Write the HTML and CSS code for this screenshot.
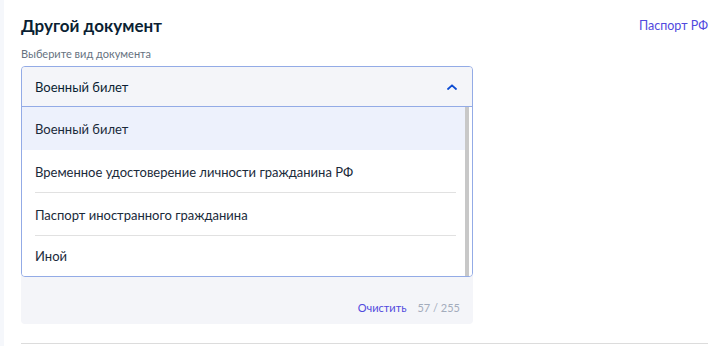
FILE: index.html
```html
<!DOCTYPE html>
<html lang="ru">
<head>
<meta charset="utf-8">
<link rel="stylesheet" href="styles.css">
</head>
<body>
<div class="page">
  <div class="content">
    <div class="head">
      <h2 class="title">Другой документ</h2>
      <a class="link" href="#">Паспорт РФ</a>
    </div>
    <div class="label">Выберите вид документа</div>
    <div class="field">
      <div class="select">
        <div class="select-head">
          <span>Военный билет</span>
          <svg class="chev" width="10" height="6" viewBox="0 0 10 6"><path d="M1 5 L5 1.3 L9 5" fill="none" stroke="#0d4cd3" stroke-width="1.8" stroke-linecap="round" stroke-linejoin="round"/></svg>
        </div>
        <div class="list">
          <div class="items">
            <div class="item active">Военный билет</div>
            <div class="item">Временное удостоверение личности гражданина РФ</div>
            <div class="item">Паспорт иностранного гражданина</div>
            <div class="item last">Иной</div>
          </div>
          <div class="scroll"></div>
        </div>
      </div>
      <div class="foot">
        <a class="clear" href="#">Очистить</a>
        <span class="count">57 / 255</span>
      </div>
    </div>
    <div class="rule"></div>
  </div>
</div>
</body>
</html>
```
FILE: styles.css
```css
* { box-sizing: border-box; }
html, body { margin: 0; padding: 0; background: #fff; }
body { font-family: Lato, "Noto Sans", sans-serif; color: #0b1f33; }
.page {
  width: 727px;
  height: 346px;
  border-left: 4px solid #f5f7fb;
  overflow: hidden;
}
.content {
  padding: 15px 19px 0 17px;
}
.head {
  display: flex;
  justify-content: space-between;
  align-items: flex-start;
}
.title {
  margin: 0;
  font-size: 17px;
  font-weight: 700;
  line-height: 22px;
  color: #0b1f33;
}
.link {
  margin-top: 3px;
  font-size: 12.5px;
  line-height: 16px;
  color: #5149de;
  text-decoration: none;
}
.label {
  margin-top: 10px;
  font-size: 11px;
  line-height: 14px;
  color: #66727f;
}
.field {
  margin-top: 5px;
  width: 452px;
  background: #f4f5f9;
  border-radius: 4px;
}
.select {
  border: 1px solid #93abe6;
  border-radius: 4px;
  overflow: hidden;
}
.select-head {
  height: 40px;
  display: flex;
  align-items: center;
  justify-content: space-between;
  padding: 0 15px 0 13px;
  font-size: 13px;
  background: #f4f5f9;
  border-bottom: 1px solid #93abe6;
}
.chev { display: block; }
.list {
  display: flex;
  background: #fff;
}
.items { flex: 1; }
.item {
  height: 43px;
  display: flex;
  align-items: center;
  padding: 0 13px;
  font-size: 13px;
  color: #1a2a3a;
  position: relative;
}
.item::after {
  content: "";
  position: absolute;
  left: 13px;
  right: 9px;
  bottom: 0;
  height: 1px;
  background: #e1e1e1;
}
.item.active { background: #edf1fc; }
.item.active::after, .item.last::after { display: none; }
.item.last { height: 40px; }
.scroll {
  width: 4px;
  margin-right: 3px;
  background: #c8c8c8;
}
.foot {
  height: 47px;
  display: flex;
  justify-content: flex-end;
  align-items: center;
  gap: 11px;
  padding: 14px 13px 0 0;
  font-size: 11px;
}
.clear { color: #5149de; text-decoration: none; }
.count { color: #a3acbc; }
.rule {
  margin-top: 19px;
  height: 1px;
  background: #dcdcdc;
}
```
